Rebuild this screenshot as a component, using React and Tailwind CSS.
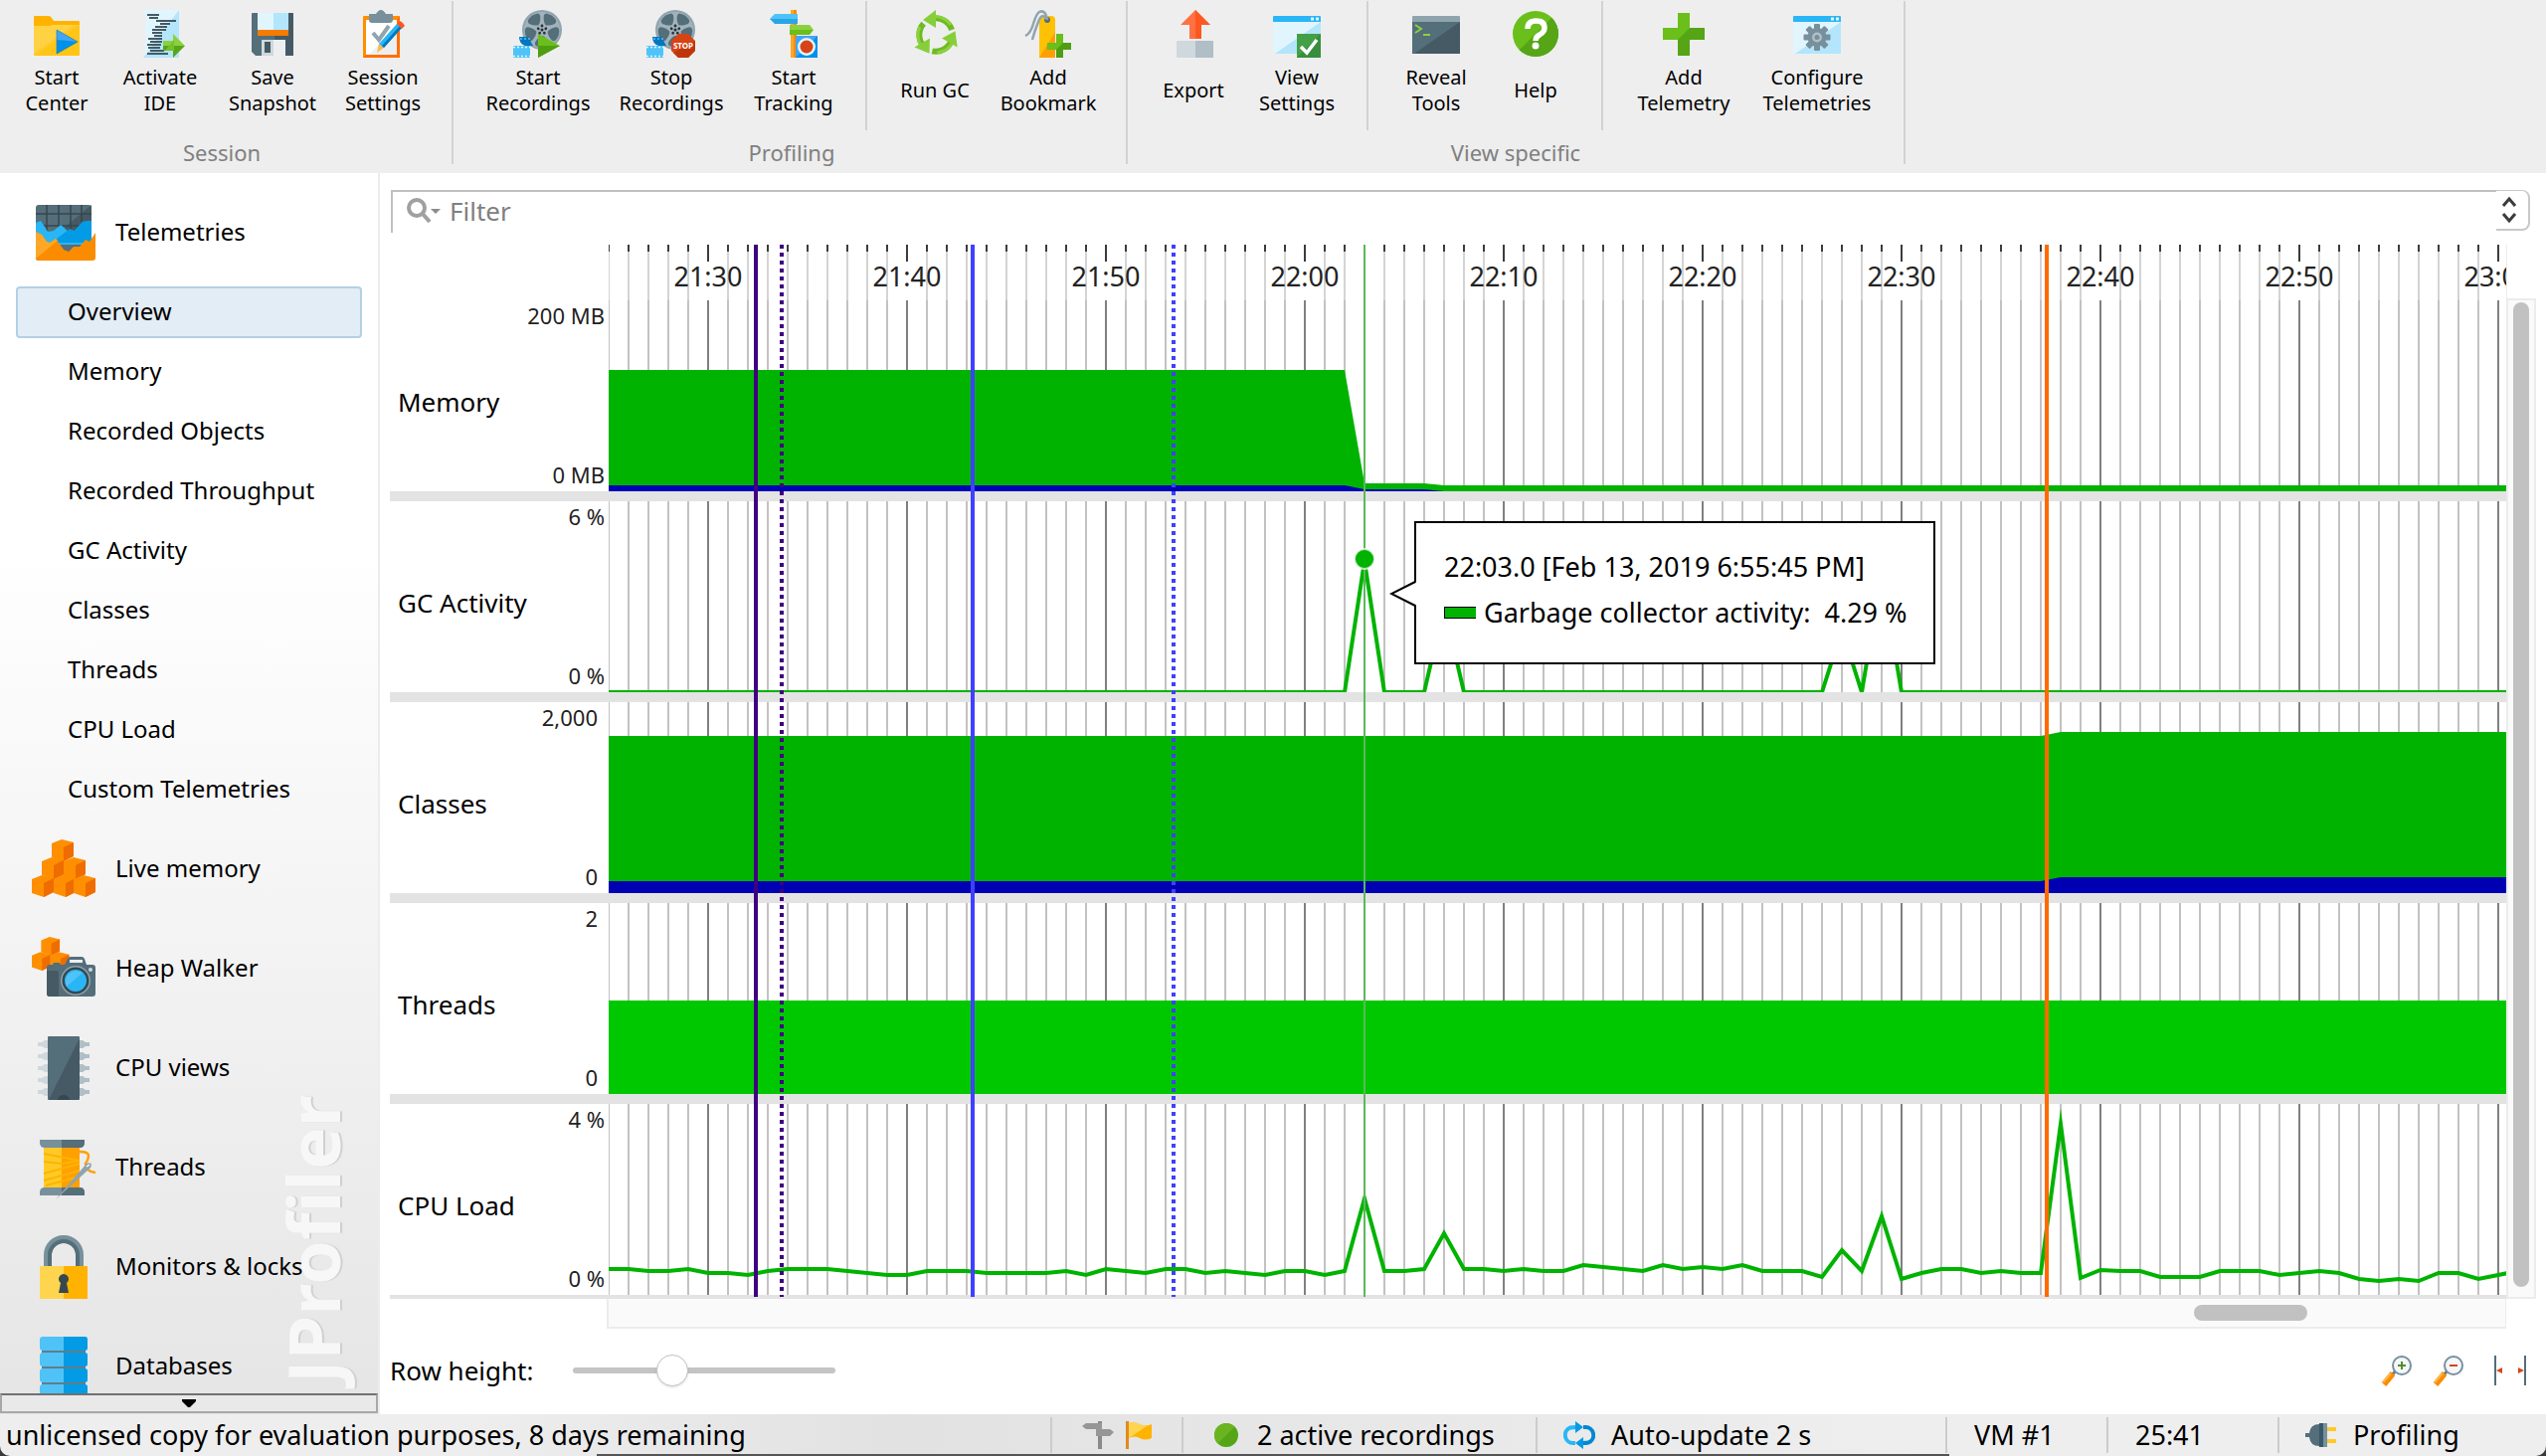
import React from "react";

/* ---------- toolbar icons (48 x 48) ---------- */

const Icon = ({ children, size = 48, className = "" }) => (
  <svg viewBox={`0 0 ${size} ${size}`} width={size} height={size} className={`shrink-0 overflow-visible ${className}`} aria-hidden="true">
    {children}
  </svg>
);

const FolderIcon = () => (
  <Icon>
    <path d="M2 6h14q2 0 3 2l2 3h25q1 0 1 1v10H1V7q0-1 1-1z" fill="#ffb300" />
    <path d="M1 16h16l4-1h26v30q0 1-1 1H2q-1 0-1-1z" fill="#ffca28" />
    <path d="M47 15v31H2z" fill="#ffc107" opacity=".6" />
    <path d="M1 16h16l4-1h20L1 44z" fill="#ffd54f" opacity=".7" />
    <path d="M24 20l21 12H24z" fill="#42a5f5" />
    <path d="M24 44l21-12L24 30z" fill="#0091ea" />
    <path d="M24 20l21 12-21 12z" fill="none" stroke="#0277bd" strokeWidth=".6" />
  </Icon>
);

const IdeIcon = () => (
  <Icon>
    <path d="M7 0h36v48H7l3-6-2-7 3-8-3-9 3-9z" fill="#e1f5fe" />
    <path d="M43 0v48H7z" fill="#b3e5fc" />
    <g stroke="#455a64" strokeWidth="2">
      <path d="M11 5h12M13 8h9M20 11h20M24 14h10M19 17h12M16 20h14M16 23h10M18 26h8M12 29h14M14 32h12M11 35h14M12 38h12M14 41h14M11 44h21" />
    </g>
    <path d="M27 31h10v-7l12 12H27z" fill="#8bd13f" />
    <path d="M27 41h10v7l12-12H27z" fill="#58a618" />
    <path d="M29 41h9V30z" fill="#76c12c" />
  </Icon>
);

const SaveIcon = () => (
  <Icon>
    <path d="M3 4q0-1 1-1h40q1 0 1 1v42H7l-4-4z" fill="#546e7a" />
    <path d="M26 3h18q1 0 1 1v42H26z" fill="#455a64" />
    <path d="M9 3h31v18H9z" fill="#e1f5fe" />
    <path d="M25 3h15v18H25z" fill="#b3e5fc" />
    <path d="M9 20h31v6H9z" fill="#f57c00" />
    <path d="M13 30h24v16H13z" fill="#cfd8dc" />
    <path d="M25 30h12v16H25z" fill="#eceff1" />
    <path d="M16 32h6v11h-6z" fill="#455a64" />
  </Icon>
);

const ClipboardIcon = () => (
  <Icon>
    <rect x="4" y="6" width="37" height="42" rx="1" fill="#ff8f00" />
    <path d="M41 6v42H4z" fill="#ff6f00" />
    <path d="M7 10h31v35H7z" fill="#fff" />
    <path d="M38 16v29H10z" fill="#eceff1" />
    <path d="M10 4h7q5-8 10 0h7v6q0 3-3 3H13q-3 0-3-3z" fill="#78909c" />
    <path d="M14 23l6 7 10-14" fill="none" stroke="#90a4ae" strokeWidth="4" />
    <path d="M18 43l2-9 5 4z" fill="#ffb74d" />
    <path d="M20 34l18-20 5 4-18 20z" fill="#29b6f6" />
    <path d="M23 36l18-20 2 2-18 20z" fill="#0277bd" />
    <path d="M38 14l3-3q3 1 5 5l-3 3z" fill="#ff5722" />
  </Icon>
);

const Reel = () => (
  <>
    <circle cx="28" cy="20" r="20" fill="#90a4ae" />
    <circle cx="28" cy="20" r="18" fill="#a3b3bb" />
    {[0, 72, 144, 216, 288].map((a) => (
      <path key={a} d="M28 13q-3-1-6-6q-1-3 6-3.500q7 .5 6 3.500q-3 5-6 6z" fill="#546e7a" stroke="#546e7a" strokeWidth="2" transform={`rotate(${a + 36} 28 20)`} />
    ))}
    {[0, 72, 144, 216, 288].map((a) => (
      <circle key={a} cx="28" cy="16" r="1.400" fill="#263238" transform={`rotate(${a} 28 20)`} />
    ))}
    <circle cx="28" cy="20" r="1.500" fill="#263238" />
    <path d="M5 27h9l5 9h-8q-6-2-6-9z" fill="#0277bd" />
    <path d="M-1 36h17v12H-1z" fill="#4fc3f7" />
    <path d="M-1 37.500h17M-1 46.500h17" stroke="#e1f5fe" strokeWidth="1.500" strokeDasharray="2 2" />
    <path d="M6 29h10" stroke="#4fc3f7" strokeWidth="1.500" strokeDasharray="2 2" />
  </>
);

const StartRecIcon = () => (
  <Icon>
    <Reel />
    <path d="M24 24l22 12-22 12z" fill="#6abf1b" />
    <path d="M24 48l22-12H24z" fill="#4e9d13" />
  </Icon>
);

const StopRecIcon = () => (
  <Icon>
    <Reel />
    <path d="M31 24h10l7 7v10l-7 7H31l-7-7V31z" fill="#d84315" />
    <path d="M48 31v10l-7 7H31l-5-5z" fill="#bf360c" />
    <text x="36" y="39" textAnchor="middle" fontSize="8" fontWeight="bold" fill="#fff">STOP</text>
  </Icon>
);

const SignpostIcon = () => (
  <Icon>
    <path d="M21 0h6v48h-6z" fill="#ffa726" />
    <path d="M24 0h3v48h-3z" fill="#fb8c00" />
    <path d="M5 4h23v5H0z" fill="#4fc3f7" />
    <path d="M0 9h28v5H5z" fill="#29a5e8" />
    <path d="M20 15h20l4 5H20z" fill="#8bd13f" />
    <path d="M20 20h24l-4 5H20z" fill="#6abf1b" />
    <path d="M26 26h22v22H26z" fill="#42a5f5" />
    <path d="M48 26v22H26z" fill="#0091ea" />
    <circle cx="37" cy="37" r="9" fill="#e1f5fe" />
    <circle cx="37" cy="37" r="6.500" fill="#d84315" />
  </Icon>
);

const RecycleIcon = () => (
  <Icon>
    {[0, 120, 240].map((a) => (
      <g key={a} transform={`rotate(${a} 25 25)`}>
        <path d="M22 8.500A17 17 0 0 1 41 20" fill="none" stroke="#6dbb21" strokeWidth="6" />
        <path d="M22 7A18 18 0 0 1 40 15" fill="none" stroke="#8bd13f" strokeWidth="3" />
        <path d="M25 0v18L12 10z" fill="#86cf3a" />
      </g>
    ))}
  </Icon>
);

const BookmarkIcon = () => (
  <Icon>
    <path d="M15 10q0-4 4-4h8q4 0 4 4v38H15z" fill="#ffc107" />
    <path d="M31 22v26H15z" fill="#ffa000" />
    <circle cx="23" cy="10" r="3" fill="#546e7a" />
    <path d="M23 10Q21-1 15 2Q12 4 9 14T1 26M22 9Q18 2 14 12T8 30" fill="none" stroke="#90a4ae" strokeWidth="2.500" />
    <path d="M32 24h7v9h8v7h-8v8h-7v-8h-9v-7h9z" fill="#6abf1b" />
    <path d="M39 33h8v7h-8v8h-7v-8z" fill="#4e9d13" />
  </Icon>
);

const ExportIcon = () => (
  <Icon>
    <path d="M26 0l15 15h-9v14H20V15h-9z" fill="#ff7043" />
    <path d="M26 0l15 15h-9v14h-6z" fill="#ff5722" />
    <rect x="7" y="31" width="37" height="17" rx="1" fill="#cfd8dc" />
    <path d="M26 31h17q1 0 1 1v15q0 1-1 1H26z" fill="#b0bec5" />
  </Icon>
);

const WindowBase = ({ title, light, dark, dots }) => (
  <>
    <path d="M0 7q0-1 1-1h46q1 0 1 1v5H0z" fill={title} />
    <path d="M0 12h48v32H0z" fill={light} />
    <path d="M48 12v32H2z" fill={dark} />
    {dots && <path d="M38 9h3M43 9h3" stroke="#e1f5fe" strokeWidth="3" />}
  </>
);

const ViewSettingsIcon = () => (
  <Icon>
    <WindowBase title="#29b6f6" light="#e1f5fe" dark="#b3e5fc" dots />
    <path d="M24 24h24v24H24z" fill="#43a047" />
    <path d="M48 24v24H24z" fill="#388e3c" />
    <path d="M28 37l6 6 10-13" fill="none" stroke="#fff" strokeWidth="3.500" />
  </Icon>
);

const TerminalIcon = () => (
  <Icon>
    <WindowBase title="#90a4ae" light="#546e7a" dark="#455a64" />
    <path d="M3 15l6 4-6 4M11 25h7" fill="none" stroke="#8bd13f" strokeWidth="2" />
  </Icon>
);

const HelpIcon = () => (
  <Icon>
    <circle cx="24" cy="24" r="23" fill="#6abf1b" />
    <path d="M40.300 7.700A23 23 0 0 1 7.700 40.300z" fill="#55a516" />
    <path d="M16 19q0-8 8.500-8t8.500 7q0 4-5 7q-4 2-4 6" fill="none" stroke="#fff" strokeWidth="5.500" />
    <circle cx="24" cy="36" r="3.500" fill="#fff" />
  </Icon>
);

const PlusIcon = () => (
  <Icon>
    <path d="M18 3h12v15h15v12H30v16H18V30H3V18h15z" fill="#6abf1b" />
    <path d="M30 18h15v12H30v16H18V30z" fill="#55a516" />
  </Icon>
);

const ConfigureIcon = () => (
  <Icon>
    <WindowBase title="#29b6f6" light="#e1f5fe" dark="#b3e5fc" dots />
    <g fill="#78909c">
      {[0, 45, 90, 135].map((a) => (
        <rect key={a} x="21" y="14" width="6" height="27" rx="1" transform={`rotate(${a} 24 27.500)`} />
      ))}
      <circle cx="24" cy="27.500" r="9.500" />
    </g>
    <circle cx="24" cy="27.500" r="5" fill="#b0bec5" />
    <circle cx="24" cy="27.500" r="2.500" fill="#78909c" />
  </Icon>
);

/* ---------- sidebar icons (64 x 64) ---------- */

const TelemetryIcon = () => (
  <Icon size={64}>
    <rect x="4" y="4" width="56" height="56" rx="3" fill="#546e7a" />
    <path d="M60 4v30H24z" fill="#455a64" />
    <path d="M4 13h56M4 25h56M15 4v26M27 4v26M39 4v26M50 4v26" stroke="#37474f" strokeWidth="1.500" />
    <path d="M4 22l5-2 7 11 6-1 7-6 8 7 6-1 8-9 9-1v24H4z" fill="#29b6f6" />
    <path d="M60 20v22H20L38 28l5 2 8-9z" fill="#039be5" />
    <path d="M4 31l6 3 5 7 3 1 6-4 8 11 5 2 5-5 6 0 6-7 4 2 6-9v25q0 3-3 3H7q-3 0-3-3z" fill="#fb8c00" />
    <path d="M4 31l6 3 5 7 3 1 6-4 2 2L4 58z" fill="#ffa726" />
  </Icon>
);

const Cube = ({ x, y }) => (
  <g transform={`translate(${x} ${y})`}>
    <path d="M0 4L10 0l12 3v14l-10 5-12-4z" fill="#ff8f00" />
    <path d="M12 8l10-5v14l-10 5z" fill="#ef6c00" />
  </g>
);

const LiveMemoryIcon = () => (
  <Icon size={64}>
    <Cube x={20} y={2} />
    <Cube x={10} y={20} />
    <Cube x={32} y={20} />
    <Cube x={0} y={38} />
    <Cube x={22} y={38} />
    <Cube x={42} y={38} />
    <path d="M22 20l10-4v14l10-6v14l-10 5-10-4z" fill="#ff8f00" opacity=".9" />
    <path d="M22 28l10-5v14l-10 5z" fill="#ef6c00" />
  </Icon>
);

const HeapIcon = () => (
  <Icon size={64}>
    <g transform="translate(0 0) scale(.85)">
      <Cube x={11} y={0} />
      <Cube x={0} y={18} />
      <Cube x={22} y={18} />
    </g>
    <path d="M15 31q0-3 3-3h3l1-2h6l1 2h4l3-6q1-2 3-2h11q2 0 3 2l2 6h6q3 0 3 3v26q0 3-3 3H18q-3 0-3-3z" fill="#546e7a" />
    <path d="M15 34h10q2 0 2 2v24h-9q-3 0-3-3z" fill="#455a64" />
    <path d="M38 23h13v3H38z" fill="#eceff1" />
    <circle cx="44" cy="44" r="15" fill="#90a4ae" />
    <circle cx="44" cy="44" r="13.500" fill="#37474f" />
    <circle cx="44" cy="44" r="11" fill="#29b6f6" />
    <path d="M35 50A11 11 0 0 1 51 36z" fill="#4fc3f7" />
    <circle cx="59" cy="33" r="2" fill="#cfd8dc" />
  </Icon>
);

const CpuIcon = () => (
  <Icon size={64}>
    {[8, 20, 32, 44, 56].map((y) => (
      <g key={y}>
        <path d={`M6 ${y - 2}h4l3-2h3v8h-3l-3-2H6z`} fill="#cfd8dc" />
        <path d={`M58 ${y - 2}h-4l-3-2h-3v8h3l3-2h4z`} fill="#b0bec5" />
      </g>
    ))}
    <rect x="16" y="0" width="32" height="64" rx="1" fill="#546e7a" />
    <path d="M48 2v60q0 2-2 2H17z" fill="#455a64" />
    <path d="M26 64a6 5 0 0 1 12 0z" fill="#37474f" />
  </Icon>
);

const SpoolIcon = () => (
  <Icon size={64}>
    <path d="M8 4h45v3q0 5-5 5H13q-5 0-5-5zM8 60h45v-3q0-5-5-5H13q-5 0-5 5z" fill="#78909c" />
    <path d="M30 4h23v3q0 5-5 5H30zM30 60h23v-3q0-5-5-5H30z" fill="#546e7a" />
    <path d="M12 12h36v40H12z" fill="#ffca28" />
    <path d="M30 12h18v40H30z" fill="#ffa000" />
    <path d="M12 18l36 7M12 26l18 2 18-3M12 38l36-10M12 45l36-10M14 50l34-9" stroke="#ffb300" strokeWidth="2" fill="none" />
    <path d="M48 16q9 0 9 4t-3 8q0 8 10 9" fill="none" stroke="#ffa000" strokeWidth="2.500" />
    <path d="M24 64l31-36q4-2 5 1q0 3-3 5z" fill="#90a4ae" />
    <path d="M55 31l3-2" stroke="#fff" strokeWidth="1.500" />
  </Icon>
);

const LockIcon = () => (
  <Icon size={64}>
    <path d="M16 32V20a16 16 0 0 1 32 0v12" fill="none" stroke="#78909c" strokeWidth="8" />
    <path d="M18 32V20a14 14 0 0 1 28 0v12" fill="none" stroke="#546e7a" strokeWidth="4" />
    <path d="M8 32q0-1 1-1h46q1 0 1 1v32H8z" fill="#ffd54f" />
    <path d="M32 31h23q1 0 1 1v32H32z" fill="#ffb300" />
    <path d="M29 48a5 5 0 1 1 6 0l2 10H27z" fill="#37474f" />
  </Icon>
);

const DatabaseIcon = () => (
  <Icon size={64}>
    <path d="M10 12h44v50H10z" fill="#607d8b" />
    {[2, 18, 34, 50].map((y) => (
      <g key={y}>
        <rect x="8" y={y} width="48" height="14" rx="3" fill="#4fc3f7" />
        <path d={`M32 ${y}h21q3 0 3 3v8q0 3-3 3H32z`} fill="#039be5" />
      </g>
    ))}
  </Icon>
);

/* ---------- toolbar ---------- */

const Tool = ({ icon: I, lines, width }) => (
  <button type="button" className={`flex flex-col items-center pt-[10px] ${width}`}>
    <I />
    <span className="mt-[7px] flex h-[52px] flex-col justify-center text-[20px] leading-[26px]">
      {lines.map((l) => (
        <span key={l} className="whitespace-nowrap">{l}</span>
      ))}
    </span>
  </button>
);

const Rule = ({ className = "" }) => <div className={`mt-px h-[130px] w-[2px] bg-[#d2d2d2] ${className}`} />;

const Group = ({ title, children, className = "" }) => (
  <section className={`flex flex-col items-center ${className}`}>
    <div className="flex h-[131px]">{children}</div>
    <h2 className="mt-[7px] text-[22px] leading-[30px] text-[#808080]">{title}</h2>
  </section>
);

const GroupRule = () => <div className="mt-px h-[164px] w-[2px] shrink-0 bg-[#d2d2d2]" />;

const Toolbar = () => (
  <header className="flex h-[174px] shrink-0 bg-[#eeeeee]">
    <Group title="Session" className="pr-[16px] pl-[8px]">
      <Tool icon={FolderIcon} lines={["Start", "Center"]} width="w-[98px]" />
      <Tool icon={IdeIcon} lines={["Activate", "IDE"]} width="w-[110px]" />
      <Tool icon={SaveIcon} lines={["Save", "Snapshot"]} width="w-[116px]" />
      <Tool icon={ClipboardIcon} lines={["Session", "Settings"]} width="w-[106px]" />
    </Group>
    <GroupRule />
    <Group title="Profiling" className="pr-[14px] pl-[18px]">
      <Tool icon={StartRecIcon} lines={["Start", "Recordings"]} width="w-[134px]" />
      <Tool icon={StopRecIcon} lines={["Stop", "Recordings"]} width="w-[134px]" />
      <Tool icon={SignpostIcon} lines={["Start", "Tracking"]} width="w-[112px]" />
      <Rule className="mr-[18px] ml-[16px]" />
      <Tool icon={RecycleIcon} lines={["Run GC"]} width="w-[100px]" />
      <Tool icon={BookmarkIcon} lines={["Add", "Bookmark"]} width="w-[128px]" />
    </Group>
    <GroupRule />
    <Group title="View specific" className="px-[16px]">
      <Tool icon={ExportIcon} lines={["Export"]} width="w-[100px]" />
      <Tool icon={ViewSettingsIcon} lines={["View", "Settings"]} width="w-[108px]" />
      <Rule className="mr-[18px] ml-[16px]" />
      <Tool icon={TerminalIcon} lines={["Reveal", "Tools"]} width="w-[100px]" />
      <Tool icon={HelpIcon} lines={["Help"]} width="w-[100px]" />
      <Rule className="mr-[18px] ml-[16px]" />
      <Tool icon={PlusIcon} lines={["Add", "Telemetry"]} width="w-[126px]" />
      <Tool icon={ConfigureIcon} lines={["Configure", "Telemetries"]} width="w-[142px]" />
    </Group>
    <GroupRule />
  </header>
);

/* ---------- sidebar ---------- */

const SUB_VIEWS = ["Overview", "Memory", "Recorded Objects", "Recorded Throughput", "GC Activity", "Classes", "Threads", "CPU Load", "Custom Telemetries"];

const Section = ({ icon: I, label }) => (
  <button type="button" className="flex h-[100px] w-full shrink-0 items-center gap-[20px] pl-[32px] text-left">
    <I />
    <span className="pb-[2px]">{label}</span>
  </button>
);

const Sidebar = () => (
  <aside className="flex w-[382px] shrink-0 flex-col border-r-2 border-[#ececec] bg-linear-to-b from-white from-30% to-[#e5e5e5] text-[24px]">
    <nav className="relative flex min-h-0 flex-1 flex-col overflow-hidden pt-[10px]">
      <div className="absolute right-[22px] bottom-[10px] rotate-180 text-[72px] leading-[88px] font-bold text-[#f7f7f7] [text-shadow:0_2px_1px_#cfcfcf] [writing-mode:vertical-rl]">
        JProfiler
      </div>
      <div className="relative">
        <Section icon={TelemetryIcon} label="Telemetries" />
        <ul>
          {SUB_VIEWS.map((v, i) => (
            <li key={v} className="h-[60px] px-[16px] py-[4px]">
              <button
                type="button"
                className={
                  i === 0
                    ? "h-[52px] w-full rounded-[4px] border-2 border-[#b3d0e6] bg-[#e3edf6] pb-[2px] pl-[50px] text-left"
                    : "h-[52px] w-full border-2 border-transparent pb-[2px] pl-[50px] text-left"
                }
              >
                {v}
              </button>
            </li>
          ))}
        </ul>
        <Section icon={LiveMemoryIcon} label="Live memory" />
        <Section icon={HeapIcon} label="Heap Walker" />
        <Section icon={CpuIcon} label="CPU views" />
        <Section icon={SpoolIcon} label="Threads" />
        <Section icon={LockIcon} label="Monitors & locks" />
        <Section icon={DatabaseIcon} label="Databases" />
      </div>
    </nav>
    <button type="button" aria-label="Scroll down" className="mb-px flex h-[20px] shrink-0 items-center justify-center border-2 border-[#a8a8a8] border-t-[#707070] bg-[#e9e9e9]">
      <svg width="14" height="8" viewBox="0 0 14 8"><path d="M0 0h14v2L8 8H6L0 2z" fill="#000" /></svg>
    </button>
  </aside>
);

/* ---------- telemetry chart ---------- */

const STEP = 20;
const TICKS = Array.from({ length: 96 }, (_, i) => i);
const isMajor = (i) => i % 10 === 5;
const timeLabel = (i) => {
  const m = 21 * 60 + 30 + (i - 5);
  return `${Math.floor(m / 60)}:${String(m % 60).padStart(2, "0")}`;
};

const TimeAxis = () => (
  <svg className="block h-[56px] w-full overflow-hidden">
    {TICKS.map((i) => (
      <g key={i}>
        {!isMajor(i) && <rect x={i * STEP - 1} y="7" width="2" height="49" fill="#d4d4d4" />}
        <rect x={i * STEP - 1} y="0" width="2" height={isMajor(i) ? 17 : 7} fill="#3c3c3c" />
      </g>
    ))}
    {TICKS.filter(isMajor).map((i) => (
      <text key={i} x={i * STEP} y="42" textAnchor="middle" fontSize="27" fill="#222">{timeLabel(i)}</text>
    ))}
  </svg>
);

const Grid = () => (
  <>
    {TICKS.map((i) => (
      <rect key={i} x={i * STEP - 1} y="0" width="2" height="192" fill={isMajor(i) ? "#808080" : "#c2c2c2"} />
    ))}
  </>
);

const CPU = [
  26, 26, 24, 24, 26, 22, 22, 20, 24, 26, 26, 26, 24, 22, 20, 20, 24, 24, 24, 22, 22, 22, 22, 24, 20, 26, 24, 22, 26, 26, 22, 24, 22, 20, 24, 24, 20,
  24, 97, 24, 24, 26, 62, 26, 26, 24, 26, 24, 24, 30, 28, 26, 24, 30, 26, 28, 26, 30, 24, 24, 24, 18, 45, 24, 79, 16, 22, 26, 26, 22, 24, 22, 22, 172,
  17, 25, 24, 24, 18, 18, 18, 24, 24, 24, 20, 22, 24, 22, 16, 14, 16, 14, 22, 22, 16, 20, 24,
];
const cpuPoints = CPU.map((v, i) => `${i * STEP},${192 - v}`).join(" ");

const MemoryPlot = () => (
  <>
    <path d="M0 192V70H740L760 184H820L840 186H3000V192z" fill="#00b300" />
    <path d="M0 192V186H740L760 190H820L840 192z" fill="#0000b3" />
  </>
);
const GcPlot = () => (
  <path d="M0 192H740L760 60L780 192H820L840 106L860 192H1220L1240 129L1260 192L1280 72L1300 192H3000" fill="none" stroke="#00b300" strokeWidth="4" />
);
const ClassesPlot = () => (
  <>
    <path d="M0 192V34H1440L1460 30H3000V192z" fill="#00b300" />
    <path d="M0 192V180H1440L1460 176H3000V192z" fill="#0000b3" />
  </>
);
const ThreadsPlot = () => <path d="M0 192V98H3000V192z" fill="#00c800" />;
const CpuPlot = () => <polyline points={cpuPoints} fill="none" stroke="#00b300" strokeWidth="4" strokeMiterlimit="10" />;

const ROWS = [
  { name: "Memory", max: "200 MB", min: "0 MB", plot: MemoryPlot },
  { name: "GC Activity", max: "6 %", min: "0 %", plot: GcPlot },
  { name: "Classes", max: "2,000", min: "0", plot: ClassesPlot, inset: true },
  { name: "Threads", max: "2", min: "0", plot: ThreadsPlot, inset: true },
  { name: "CPU Load", max: "4 %", min: "0 %", plot: CpuPlot },
];

const Row = ({ name, max, min, plot: Plot, inset, last }) => (
  <div className={last ? "flex h-[196px] border-b-4 border-[#e3e3e3]" : "flex h-[202px] border-b-10 border-[#e3e3e3]"}>
    <div className="flex w-[220px] shrink-0 justify-between pl-[8px]">
      <span className="mt-[84px] leading-[36px] whitespace-nowrap">{name}</span>
      <span className={`flex flex-col justify-between pb-[2px] text-right text-[22px] leading-[30px] whitespace-nowrap text-[#222] ${inset ? "pr-[11px]" : "pr-[4px]"}`}>
        <span>{max}</span>
        <span>{min}</span>
      </span>
    </div>
    <svg className="block h-[192px] min-w-0 flex-1 overflow-hidden">
      <Grid />
      <Plot />
    </svg>
  </div>
);

const Markers = () => (
  <svg className="pointer-events-none absolute inset-y-0 right-0 left-[220px] h-full w-[calc(100%-220px)]">
    <g strokeWidth="4" fill="none">
      <path d="M148 0V1058" stroke="#3f007f" />
      <path d="M174 0V1058" stroke="#3f007f" strokeDasharray="4 4" />
      <path d="M366 0V1058" stroke="#4040ff" />
      <path d="M568 0V1058" stroke="#4040ff" strokeDasharray="4 4" />
      <path d="M760 0V1058" stroke="#5cb85c" strokeWidth="2" />
      <path d="M1446 0V1058" stroke="#ff6a00" />
    </g>
    <circle cx="760" cy="316" r="10" fill="#00b300" stroke="#fff" strokeOpacity=".7" strokeWidth="2" />
  </svg>
);

const Tooltip = () => (
  <div role="tooltip" className="absolute top-[278px] left-[1030px] h-[144px] w-[524px] border-2 border-black bg-white pt-[26px] pl-[28px] text-[27px] leading-[36px]">
    <svg className="absolute top-[57px] left-[-27px]" width="28" height="28" viewBox="0 0 28 28">
      <path d="M28 2L2 14l26 12z" fill="#fff" />
      <path d="M26 2L2 14l24 12" fill="none" stroke="#000" strokeWidth="2" />
    </svg>
    <p className="whitespace-nowrap">22:03.0 [Feb 13, 2019 6:55:45 PM]</p>
    <p className="mt-[10px] flex items-center whitespace-nowrap">
      <span className="mr-[8px] h-[12px] w-[32px] border border-r-0 border-black bg-[#00b300]" />
      Garbage collector activity:
      <span className="ml-[14px]">4.29 %</span>
    </p>
  </div>
);

const FilterBar = () => (
  <div className="mr-[16px] ml-[11px] flex h-[43px]">
    <label className="flex min-w-0 flex-1 items-center border-t-2 border-l-2 border-[#c0c0c0] pb-[3px] pl-[14px]">
      <svg width="36" height="26" viewBox="0 0 36 26" aria-hidden="true">
        <circle cx="10" cy="10" r="8" fill="none" stroke="#a0a0a0" strokeWidth="4" />
        <path d="M16 16l7 8" stroke="#a0a0a0" strokeWidth="4" />
        <path d="M24 11h10l-5 5z" fill="#8c8c8c" />
      </svg>
      <input type="text" aria-label="Filter" placeholder="Filter" className="ml-[7px] min-w-0 flex-1 bg-transparent outline-none placeholder:text-[#808080]" />
    </label>
    <button type="button" aria-label="Filter history" className="flex h-[41px] w-[34px] items-center rounded-r-[8px] border-t border-r-2 border-b-2 border-[#c8c8c8] bg-white pl-[5px]">
      <svg width="16" height="26" viewBox="0 0 16 26"><path d="M2 9l6-7 6 7M2 17l6 7 6-7" fill="none" stroke="#3c3c3c" strokeWidth="3" /></svg>
    </button>
  </div>
);

const Magnifier = ({ plus }) => (
  <svg width="30" height="32" viewBox="0 0 30 32" aria-hidden="true">
    <path d="M14 16l-5 6" stroke="#607d8b" strokeWidth="3" />
    <path d="M11 19L2 30" stroke="#fb8c00" strokeWidth="6" />
    <path d="M9 19L1 28" stroke="#ffb74d" strokeWidth="2" />
    <circle cx="20" cy="11" r="9" fill="#f4f7f8" stroke="#78909c" strokeWidth="2" />
    <path d="M16 11h8" stroke={plus ? "#558b2f" : "#d84315"} strokeWidth="2" />
    {plus && <path d="M20 7v8" stroke="#558b2f" strokeWidth="2" />}
  </svg>
);

const Main = () => (
  <main className="flex min-w-0 flex-1 flex-col bg-white pt-[17px]">
    <FilterBar />
    <div className="mt-[12px] ml-[10px] flex">
      <div className="min-w-0 flex-1">
        <div className="relative overflow-hidden">
          <div className="pl-[220px]"><TimeAxis /></div>
          {ROWS.map((r, i) => (
            <Row key={r.name} {...r} last={i === ROWS.length - 1} />
          ))}
          <Markers />
          <Tooltip />
        </div>
        <div className="ml-[218px] flex h-[30px] items-center border-r border-b-2 border-l-2 border-[#ececec] bg-[#fafafa]">
          <div className="ml-auto h-[16px] w-[114px] rounded-full bg-[#c1c1c1]" />
          <div className="w-[199px]" />
        </div>
      </div>
      <div className="mr-[10px] flex w-[30px] shrink-0 flex-col">
        <div className="h-[56px] border-b-2 border-l border-[#ececec]" />
        <div className="flex h-[1004px] justify-center border-x-2 border-b-2 border-[#ececec] bg-[#fafafa] pt-[2px]">
          <div className="h-[990px] w-[16px] rounded-full bg-[#c1c1c1]" />
        </div>
      </div>
    </div>
    <div className="flex h-[84px] items-center pr-[20px] pl-[10px]">
      <label htmlFor="row-height" className="w-[184px]">Row height:</label>
      <input
        id="row-height"
        type="range"
        min="0"
        max="100"
        defaultValue="36"
        className="h-[32px] w-[264px] appearance-none bg-transparent [&::-webkit-slider-runnable-track]:h-[6px] [&::-webkit-slider-runnable-track]:rounded-full [&::-webkit-slider-runnable-track]:bg-[#c4c4c4] [&::-webkit-slider-thumb]:mt-[-13px] [&::-webkit-slider-thumb]:size-[32px] [&::-webkit-slider-thumb]:appearance-none [&::-webkit-slider-thumb]:rounded-full [&::-webkit-slider-thumb]:border [&::-webkit-slider-thumb]:border-[#c4c4c4] [&::-webkit-slider-thumb]:bg-white [&::-webkit-slider-thumb]:shadow-sm"
      />
      <div className="ml-auto flex items-center">
        <button type="button" aria-label="Zoom in" className="mr-[22px]"><Magnifier plus /></button>
        <button type="button" aria-label="Zoom out" className="mr-[31px]"><Magnifier /></button>
        <button type="button" aria-label="Fit to window">
          <svg width="32" height="32" viewBox="0 0 32 32">
            <path d="M1 1v30M31 1v30" stroke="#546e7a" strokeWidth="2" />
            <path d="M2 16l6-3v6zM30 16l-6-3v6z" fill="#d84315" />
          </svg>
        </button>
      </div>
    </div>
  </main>
);

/* ---------- status bar ---------- */

const Cell = ({ children, className = "" }) => (
  <div className={`flex h-[36px] items-center border-l-2 border-[#cccccc] whitespace-nowrap ${className}`}>{children}</div>
);

const StatusBar = () => (
  <footer className="relative flex h-[42px] shrink-0 items-center overflow-hidden rounded-b-[10px] bg-linear-to-r from-[#eeeeee] from-18% via-[#e2e2e2] via-35% to-[#eeeeee] to-75% text-[27px]">
    <div className="min-w-0 flex-1 truncate pl-[6px]">unlicensed copy for evaluation purposes, 8 days remaining</div>
    <Cell className="w-[132px] gap-[12px] pl-[30px]">
      <svg width="32" height="28" viewBox="0 0 32 28" aria-hidden="true">
        <path d="M16 0h4v28h-4z" fill="#8a8a8a" />
        <path d="M4 2h16v6H4L0 5zM14 8h14l4 3-4 4H14z" fill="#969696" />
      </svg>
      <svg width="26" height="28" viewBox="0 0 26 28" aria-hidden="true">
        <path d="M0 0h3v28H0z" fill="#e08a1e" />
        <path d="M3 2q6-2 11 1t12 0v14q-7 3-12 0T3 17z" fill="#ffb300" />
        <path d="M3 2q6-2 11 1t10 0L3 17z" fill="#ffd54f" />
      </svg>
    </Cell>
    <Cell className="w-[356px] pl-[30px]">
      <svg width="26" height="26" viewBox="0 0 26 26" aria-hidden="true">
        <circle cx="13" cy="13" r="12" fill="#55a516" />
        <path d="M4.500 21.500a12 12 0 0 1 17-17z" fill="#6ab51f" />
      </svg>
      <span className="ml-[18px]">2 active recordings</span>
    </Cell>
    <Cell className="w-[412px] pl-[26px]">
      <svg width="32" height="28" viewBox="0 0 32 28" aria-hidden="true">
        <path d="M12 22H10a8 8 0 0 1-3-15.500Q9 6 13 6" fill="none" stroke="#29b6f6" strokeWidth="4" />
        <path d="M20 6h2a8 8 0 0 1 3 15.500Q23 22 19 22" fill="none" stroke="#0288d1" strokeWidth="4" />
        <path d="M12 0l8 6-8 6zM20 16l-8 6 8 6z" fill="#039be5" />
      </svg>
      <span className="ml-[16px]">Auto-update 2 s</span>
    </Cell>
    <Cell className="w-[162px] pl-[27px]">VM #1</Cell>
    <Cell className="w-[172px] pl-[27px]">25:41</Cell>
    <Cell className="w-[270px] pl-[26px]">
      <svg width="32" height="24" viewBox="0 0 32 24" aria-hidden="true">
        <path d="M22 4h9v4h-9zM22 16h9v4h-9z" fill="#ffca28" />
        <path d="M18 0h4v24h-4z" fill="#78909c" />
        <path d="M0 10h4q1-9 10-9h4v22h-4q-9 0-10-9H0z" fill="#546e7a" />
        <path d="M14 0h4v24h-4z" fill="#37596b" />
      </svg>
      <span className="ml-[16px]">Profiling</span>
    </Cell>
    <div className="absolute bottom-0 left-[600px] h-[2px] w-[1360px] bg-[#555]" />
  </footer>
);

export default function App() {
  return (
    <div className="flex h-screen flex-col bg-[#3a3a3a] font-['Noto_Sans',sans-serif] text-[26px] leading-[36px] text-black">
      <Toolbar />
      <div className="flex min-h-0 flex-1">
        <Sidebar />
        <Main />
      </div>
      <StatusBar />
    </div>
  );
}
